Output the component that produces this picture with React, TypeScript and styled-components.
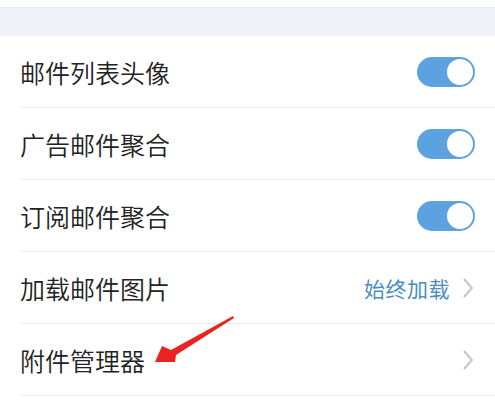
import React from "react";
import styled, { createGlobalStyle } from "styled-components";

const Global = createGlobalStyle`
  html, body { margin: 0; padding: 0; background: #ffffff; }
  body { font-family: "Noto Sans CJK SC", "Noto Sans", sans-serif; }
`;

const Page = styled.div`
  position: relative;
  width: 495px;
  height: 401px;
  overflow: hidden;
  background: #ffffff;
`;

const TopStrip = styled.div`
  height: 7px;
  background: #fdfdfe;
  border-bottom: 1px solid #e9ecf1;
`;

const SectionGap = styled.div`
  height: 28px;
  background: #eff2f7;
`;

const List = styled.div`
  display: flex;
  flex-direction: column;
  padding-left: 20px;
`;

const Row = styled.div`
  height: 72px;
  box-sizing: border-box;
  display: flex;
  align-items: center;
  justify-content: space-between;
  padding-right: 21px;
  border-bottom: 1px solid #ececee;
`;

const Label = styled.span`
  font-size: 25px;
  color: #222222;
  font-weight: 350;
`;

const Right = styled.div`
  display: flex;
  align-items: center;
  gap: 12px;
`;

const Value = styled.span`
  font-size: 21px;
  color: #4c8cc4;
  letter-spacing: 0.5px;
`;

const Toggle = styled.div<{ $on: boolean }>`
  width: 58px;
  height: 30px;
  border-radius: 15px;
  background: ${(p) => (p.$on ? "#5ca2e1" : "#e5e5e5")};
  display: flex;
  align-items: center;
  justify-content: ${(p) => (p.$on ? "flex-end" : "flex-start")};
  padding: 0 2px;
  box-sizing: border-box;
  margin-right: -1px;
`;

const Knob = styled.div`
  width: 26px;
  height: 26px;
  border-radius: 50%;
  background: #ffffff;
`;

const Chevron = () => (
  <svg width="12" height="22" viewBox="0 0 12 22">
    <path d="M2 2 L10 11 L2 20" fill="none" stroke="#c4c4c6" strokeWidth="2" />
  </svg>
);

const Arrow = styled.svg`
  position: absolute;
  left: 0;
  top: 0;
  pointer-events: none;
`;

type Item = { label: string; toggle?: boolean; value?: string; chevron?: boolean };

const items: Item[] = [
  { label: "邮件列表头像", toggle: true },
  { label: "广告邮件聚合", toggle: true },
  { label: "订阅邮件聚合", toggle: true },
  { label: "加载邮件图片", value: "始终加载", chevron: true },
  { label: "附件管理器", chevron: true },
];

export default function App() {
  return (
    <>
      <Global />
      <Page>
        <TopStrip />
        <SectionGap />
        <List>
          {items.map((it) => (
            <Row key={it.label}>
              <Label>{it.label}</Label>
              <Right>
                {it.value && <Value>{it.value}</Value>}
                {it.toggle && (
                  <Toggle $on>
                    <Knob />
                  </Toggle>
                )}
                {it.chevron && <Chevron />}
              </Right>
            </Row>
          ))}
        </List>
        <Arrow width="495" height="401" viewBox="0 0 495 401">
          <path d="M233 316 L234 318 L176 355 L175 362 L155 362 L162 346 L171 350 Z" fill="#ea2320" />
        </Arrow>
      </Page>
    </>
  );
}
